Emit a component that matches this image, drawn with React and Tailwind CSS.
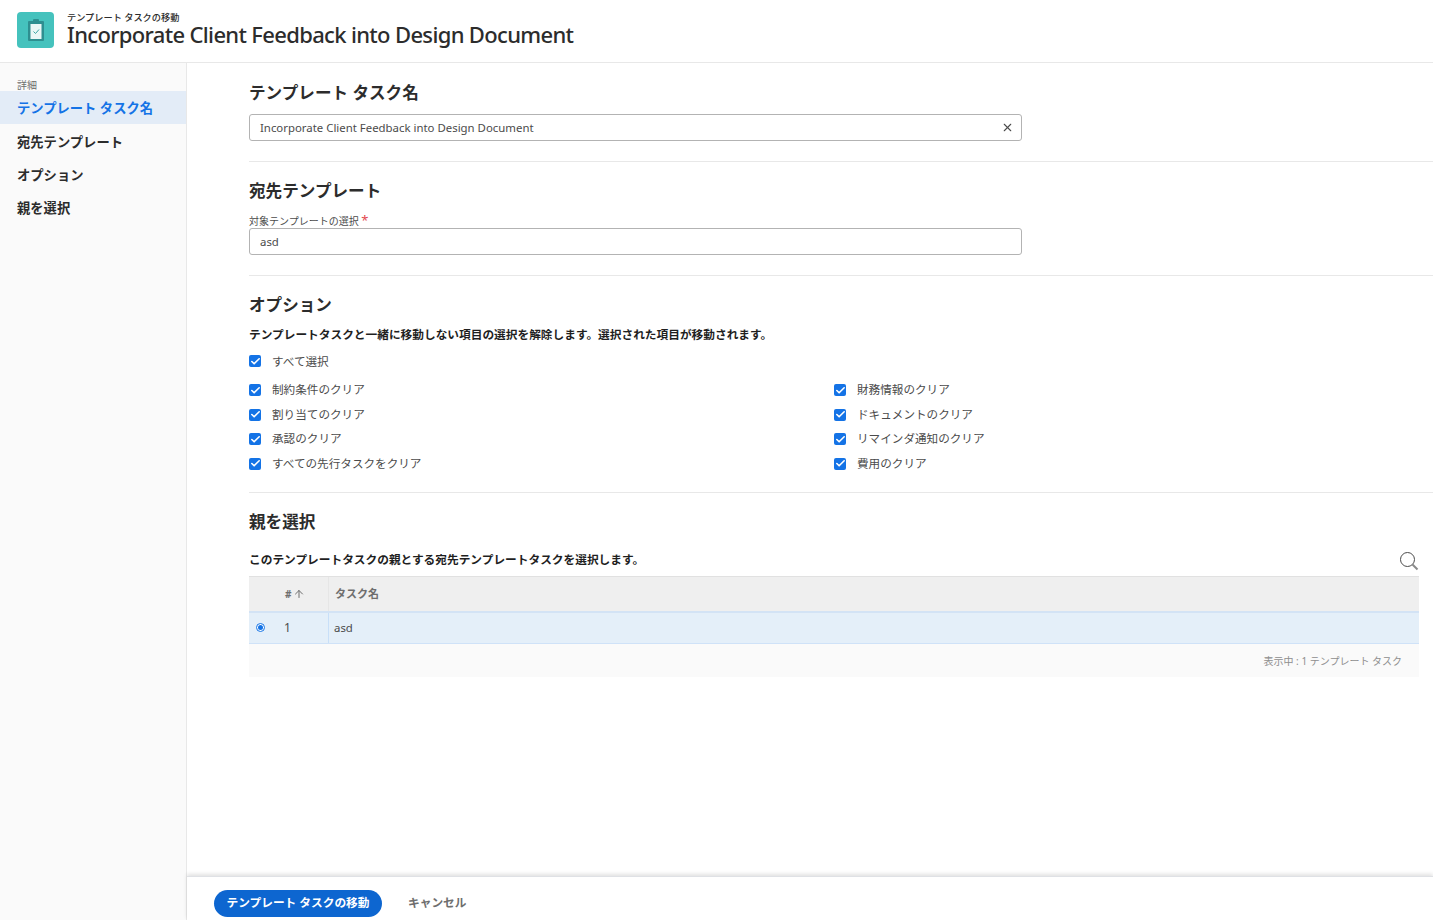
import React from "react";
import { X, ArrowUp, Check } from "lucide-react";

const navItems = ["宛先テンプレート", "オプション", "親を選択"];

const leftOptions = ["制約条件のクリア", "割り当てのクリア", "承認のクリア", "すべての先行タスクをクリア"];
const rightOptions = ["財務情報のクリア", "ドキュメントのクリア", "リマインダ通知のクリア", "費用のクリア"];

const Option = ({ label }) => (
    <div className="flex h-[24.5px] items-center">
        <span className="flex h-3 w-3 items-center justify-center rounded-[2px] bg-[#1473e6]">
            <Check size={11} strokeWidth={3.5} className="text-white" />
        </span>
        <span className="ml-[11px] text-[11.6px] text-[#4b4b4b]">{label}</span>
    </div>
);

const TemplateIcon = () => (
    <div className="flex h-9 w-[37px] items-center justify-center rounded-[4px] bg-[#45c2bd]">
        <svg width="20" height="24" viewBox="0 0 20 24">
            <rect x="2" y="3" width="16" height="20" rx="1" fill="#2e8f90" />
            <rect x="4.5" y="6" width="11" height="15" fill="#eaf7f6" />
            <rect x="7" y="1" width="6" height="4" rx="1" fill="#2e8f90" />
            <path d="M7.5 13.5l2 2 3.5-4" fill="none" stroke="#3aa5a3" strokeWidth="1" />
        </svg>
    </div>
);

const SectionTitle = ({ children }) => (
    <h2 className="text-[16.6px] font-bold leading-6 text-[#2c2c2c]">{children}</h2>
);

export default function App() {
    return (
        <div
            className="flex h-[920px] w-[1433px] flex-col overflow-hidden bg-white"
            style={{ fontFamily: '"Noto Sans", "Noto Sans CJK JP", sans-serif' }}
        >
            <header className="flex h-[63px] shrink-0 items-start border-b border-[#e8e8e8] pl-[17px] pt-3">
                <TemplateIcon />
                <div className="ml-[13px]">
                    <div className="text-[9.2px] font-medium leading-[11px] text-[#2c2c2c]">テンプレート タスクの移動</div>
                    <h1 className="text-[22px] font-medium leading-[22px] tracking-[-0.66px] text-[#2c2c2c]">
                        Incorporate Client Feedback into Design Document
                    </h1>
                </div>
            </header>

            <div className="flex min-h-0 flex-1">
                <aside className="w-[187px] shrink-0 border-r border-[#e8e8e8] bg-[#fafafa] pt-4">
                    <div className="pl-[17px] text-[10px] leading-3 text-[#6e6e6e]">詳細</div>
                    <div className="mb-[1px] flex h-[33px] items-center bg-[#e3ecf7] pl-[17px] pt-[2px] text-[13.3px] font-bold text-[#1473e6]">
                        テンプレート タスク名
                    </div>
                    {navItems.map((item) => (
                        <div key={item} className="flex h-[33px] items-center pl-[17px] pt-[2px] text-[13.3px] font-bold text-[#2c2c2c]">
                            {item}
                        </div>
                    ))}
                </aside>

                <main className="flex min-w-0 flex-1 flex-col">
                    <div className="flex-1 pl-[62px]">
                        <section className="h-[99px] border-b border-[#e8e8e8] pt-[18px]">
                            <SectionTitle>テンプレート タスク名</SectionTitle>
                            <div className="mt-[9px] flex h-[27px] w-[773px] items-center justify-between rounded-[3px] border border-[#b3b3b3] pl-[10px] pr-[7px] text-[11.4px] text-[#4b4b4b]">
                                Incorporate Client Feedback into Design Document
                                <X size={13} className="text-[#4b4b4b]" />
                            </div>
                        </section>

                        <section className="h-[114px] border-b border-[#e8e8e8] pt-[17px]">
                            <SectionTitle>宛先テンプレート</SectionTitle>
                            <div className="mt-[11px] text-[10px] leading-[14px] text-[#4b4b4b]">
                                対象テンプレートの選択 <span className="text-[13px] leading-[10px] text-[#e34850]">*</span>
                            </div>
                            <div className="flex h-[27px] w-[773px] items-center rounded-[3px] border border-[#b3b3b3] pl-[10px] text-[11.4px] text-[#4b4b4b]">
                                asd
                            </div>
                        </section>

                        <section className="h-[217px] border-b border-[#e8e8e8] pt-[17px]">
                            <SectionTitle>オプション</SectionTitle>
                            <p className="mt-[8px] text-[11.7px] font-bold leading-[18px] text-[#1f1f1f]">
                                テンプレートタスクと一緒に移動しない項目の選択を解除します。選択された項目が移動されます。
                            </p>
                            <div className="mt-[6px]">
                                <Option label="すべて選択" />
                            </div>
                            <div className="mt-[4.4px] grid w-[1170px] grid-cols-2">
                                <div>
                                    {leftOptions.map((label) => (
                                        <Option key={label} label={label} />
                                    ))}
                                </div>
                                <div>
                                    {rightOptions.map((label) => (
                                        <Option key={label} label={label} />
                                    ))}
                                </div>
                            </div>
                        </section>

                        <section className="w-[1170px] pt-[17px]">
                            <SectionTitle>親を選択</SectionTitle>
                            <div className="mt-[14px] flex h-[28px] items-center justify-between">
                                <p className="mb-[5px] text-[11.7px] font-bold text-[#1f1f1f]">
                                    このテンプレートタスクの親とする宛先テンプレートタスクを選択します。
                                </p>
                                <svg width="20" height="20" viewBox="0 0 20 20" fill="none" className="mb-[2px]">
                                    <circle cx="8.5" cy="8.5" r="7" stroke="#4b4b4b" strokeWidth="1" />
                                    <path d="M13.5 13.5l5 5" stroke="#8a8a8a" strokeWidth="2" />
                                </svg>
                            </div>
                            <div className="flex h-[37px] items-center border-b-2 border-t border-b-[#d3e3f5] border-t-[#e1e1e1] bg-[#efefef]">
                                <div className="flex h-full w-[80px] items-center border-r border-[#e6e6e6] pl-9 text-[10px] font-bold text-[#6e6e6e]">
                                    #
                                    <ArrowUp size={12} className="ml-[2px]" />
                                </div>
                                <div className="pl-[6px] text-[11px] font-bold text-[#6e6e6e]">タスク名</div>
                            </div>
                            <div className="flex h-[31px] items-center border-b border-[#cfe2f8] bg-[#e4eff9]">
                                <div className="flex h-full w-[80px] items-center border-r border-[#c8dff8] pl-[7px]">
                                    <span className="mb-[2px] flex h-[9px] w-[9px] items-center justify-center rounded-full border border-[#1473e6] bg-white">
                                        <span className="h-[5px] w-[5px] rounded-full bg-[#1473e6]" />
                                    </span>
                                    <span className="ml-[19px] text-xs text-[#4b4b4b]">1</span>
                                </div>
                                <div className="pl-[5px] text-[11.4px] text-[#4b4b4b]">asd</div>
                            </div>
                            <div className="flex h-[33px] items-center justify-end bg-[#fafafa] pr-[17px] pt-[1px] text-[10px] text-[#8e8e8e]">
                                表示中 : 1 テンプレート タスク
                            </div>
                        </section>
                    </div>

                    <footer className="flex h-[44px] shrink-0 items-center gap-[26px] border-t border-[#dfe1e5] pl-[27px] pt-[10px] shadow-[0_-2px_4px_rgba(0,0,0,0.12)]">
                        <button className="h-[27px] w-[168px] rounded-full bg-[#0d66d0] pb-[1px] text-[11.7px] font-bold text-white">
                            テンプレート タスクの移動
                        </button>
                        <button className="pb-[1px] text-[11.7px] font-bold text-[#6e6e6e]">キャンセル</button>
                    </footer>
                </main>
            </div>
        </div>
    );
}
